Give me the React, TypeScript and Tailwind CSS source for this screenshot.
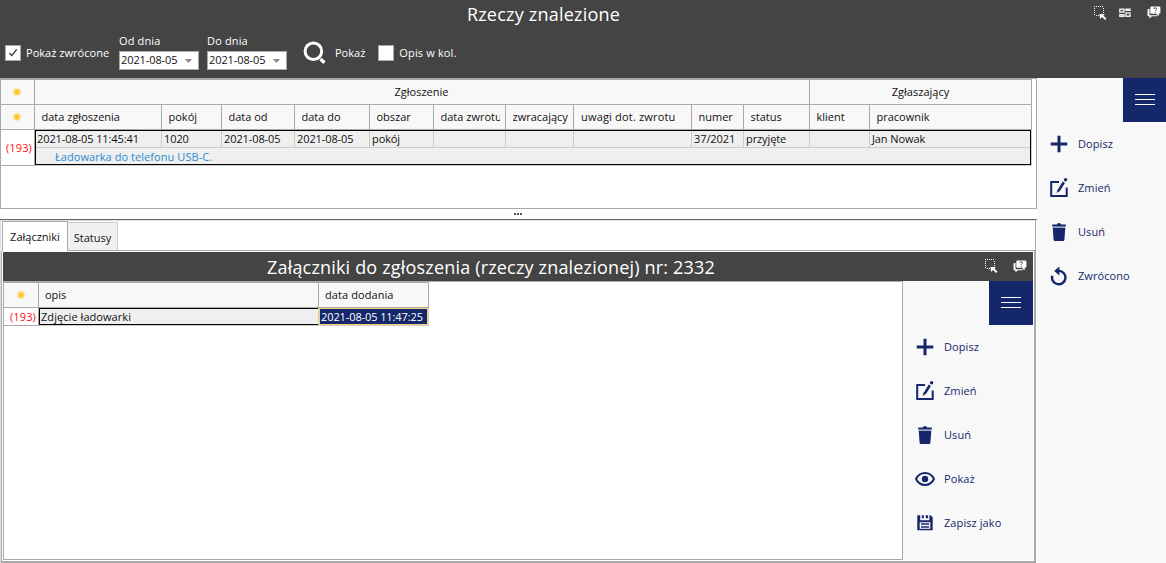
import type { ReactNode } from "react";

const columns = "grid-cols-[34px_127px_60px_73px_75px_64px_72px_68px_118px_52px_66px_60px_162px]";

const headers = [
  "data zgłoszenia",
  "pokój",
  "data od",
  "data do",
  "obszar",
  "data zwrotu",
  "zwracający",
  "uwagi dot. zwrotu",
  "numer",
  "status",
  "klient",
  "pracownik",
];

const record = [
  "2021-08-05 11:45:41",
  "1020",
  "2021-08-05",
  "2021-08-05",
  "pokój",
  "",
  "",
  "",
  "37/2021",
  "przyjęte",
  "",
  "Jan Nowak",
];

function Sun() {
  return (
    <svg width="10" height="10" viewBox="0 0 10 10" className="shrink-0">
      <path
        d="M5 .5v9M.5 5h9M1.8 1.8l6.4 6.4M8.2 1.8L1.8 8.2M3.2 .9l3.6 8.2M6.8 .9L3.2 9.1M.9 3.2l8.2 3.6M.9 6.8l8.2-3.6"
        stroke="#ffd45e"
        strokeWidth=".6"
      />
      <circle cx="5" cy="5" r="2.8" fill="#ffc72e" />
    </svg>
  );
}

function SelectIcon() {
  return (
    <svg width="14" height="16" viewBox="0 0 14 16" shapeRendering="crispEdges">
      <path
        d="M0 0h1v1H0zM2 0h1v1H2zM4 0h1v1H4zM6 0h1v1H6zM8 0h1v1H8zM0 2h1v1H0zM0 4h1v1H0zM0 6h1v1H0zM0 8h1v1H0zM9 2h1v1H9zM9 4h1v1H9zM9 6h1v1H9zM2 9h1v1H2zM4 9h1v1H4z"
        fill="#fff"
      />
      <path d="M5.500 8h5.500l-1.600 1.600L12.500 12.700 11.200 14 8 10.900 6 13z" fill="#fff" shapeRendering="auto" />
    </svg>
  );
}

function LayoutIcon() {
  return (
    <svg width="12" height="10" viewBox="0 0 12 10" fill="none" stroke="#eee" strokeWidth="1.400">
      <path d="M.8 1.200h4.200v2.800H.8zM7 1.200h4v1.200H7zM.8 6.600h4.200v1.600H.8zM7 4.900h4v3.300H7z" />
    </svg>
  );
}

function HelpIcon() {
  return (
    <svg width="14" height="13" viewBox="0 0 14 13">
      <path d="M2.500 3H1.600Q.5 3 .5 4v5.200q0 1 1 1h.9v2.300l2.600-2.300h4.600q.8 0 .8-1H3.300q-.8 0-.8-.8z" fill="#fff" />
      <path d="M4.500 .5H12q1.400 0 1.400 1.200v5q0 1.100-1.400 1.100h-.3v2.400L9.200 7.800H4.500q-1.200 0-1.200-1.100v-5Q3.300 .5 4.500 .5z" fill="#fff" />
      <path d="M6.800 2.800q.1-1 1.400-1 1.300.1 1.300 1.100 0 .6-.7 1-.5.3-.5.9M8.300 5.900v1" stroke="#444" strokeWidth="1" fill="none" />
    </svg>
  );
}

function SearchIcon() {
  return (
    <svg width="24" height="24" viewBox="0 0 24 24" fill="none" stroke="#fff">
      <circle cx="10.400" cy="10.200" r="8.300" strokeWidth="3" />
      <path d="M17.500 18l4 3.800" strokeWidth="3.400" />
    </svg>
  );
}

function PlusIcon() {
  return (
    <svg width="20" height="20" viewBox="0 0 20 20" className="text-[#14276a]">
      <path d="M10 1.700v16.600M1.700 10h16.600" stroke="currentColor" strokeWidth="3" />
    </svg>
  );
}

function EditIcon() {
  return (
    <svg width="20" height="20" viewBox="0 0 20 20" fill="none" stroke="#14276a">
      <path d="M10 4H2.200v14h15.500V9.500" strokeWidth="2" />
      <path d="M14.800 4.300L9.700 12.600" strokeWidth="2.600" />
      <path d="M8.500 11.600L7.700 15l3-2z" fill="#14276a" stroke="none" />
      <circle cx="16.600" cy="1.800" r="1.700" fill="#14276a" stroke="none" />
    </svg>
  );
}

function TrashIcon() {
  return (
    <svg width="20" height="20" viewBox="0 0 20 20" fill="#14276a">
      <path d="M3.200 2.400h4.600Q8 .9 10 .9t2.200 1.500h4.600v2H3.200z" />
      <path d="M3.600 4.400h12.800v1.300H3.600z" opacity=".25" />
      <path d="M3.700 5.700h12.600l-.9 12q-.1 1.400-1.400 1.400H6q-1.300 0-1.400-1.400z" />
    </svg>
  );
}

function UndoIcon() {
  return (
    <svg width="20" height="20" viewBox="0 0 20 20">
      <path d="M3.300 9.800A6.700 6.700 0 1 0 10 4.900H9" fill="none" stroke="#14276a" strokeWidth="2.400" />
      <path d="M10.400 .6v8.800L5.200 5z" fill="#14276a" />
    </svg>
  );
}

function EyeIcon() {
  return (
    <svg width="20" height="20" viewBox="0 0 20 20">
      <path d="M1 10Q4 4 10 4t9 6q-3 6-9 6T1 10z" fill="none" stroke="#14276a" strokeWidth="2" />
      <circle cx="10" cy="10" r="3.200" fill="#14276a" />
    </svg>
  );
}

function SaveIcon() {
  return (
    <svg width="20" height="20" viewBox="0 0 20 20">
      <path d="M2.300 2.300h2.900v5h9.200v-5h1.200l2.100 2v13H2.300z" fill="#14276a" />
      <path d="M6.800 2.300h2v3h-2zM10.800 2.300h2.300v3h-2.300z" fill="#14276a" />
      <path d="M4.700 9.200h10.600v6.600H4.700z" fill="#f8f8f8" />
      <path d="M6 11h8M6 14h8" stroke="#14276a" strokeWidth="1.300" />
    </svg>
  );
}

function MenuButton({ wide = false }: { wide?: boolean }) {
  return (
    <button
      className={
        wide
          ? "flex h-11 w-11 flex-col items-center justify-center gap-1 self-end bg-[#14276a] pb-px"
          : "flex h-11 w-[43px] flex-col items-center justify-center gap-1 self-end bg-[#14276a] pb-px"
      }
    >
      <span className="h-px w-5 bg-white" />
      <span className="h-px w-5 bg-white" />
      <span className="h-px w-5 bg-white" />
    </button>
  );
}

function Action({ icon, children }: { icon: ReactNode; children: ReactNode }) {
  return (
    <button className="flex h-11 items-center gap-[9px] pl-3 text-left tracking-[0.08px] text-[#14276a]">
      {icon}
      <span>{children}</span>
    </button>
  );
}

function DateField({ label }: { label: string }) {
  return (
    <div className="flex w-20 flex-col">
      <span className="h-[17px] leading-[13px] tracking-[0.15px] text-white">{label}</span>
      <div className="flex h-[19px] items-center justify-between border border-[#a9a9a9] bg-white pr-1.5 pl-px">
        <span className="pb-[2px] tracking-[-0.1px]">2021-08-05</span>
        <svg width="7" height="4" viewBox="0 0 7 4">
          <path d="M0 0h7L3.500 4z" fill="#888" />
        </svg>
      </div>
    </div>
  );
}

export default function App() {
  return (
    <div className="flex h-[563px] w-[1166px] flex-col overflow-hidden bg-white font-['Open_Sans','Noto_Sans',sans-serif] text-[11px] leading-4 whitespace-nowrap text-[#111]">
      <header className="flex h-[78px] shrink-0 flex-col bg-[#444]">
        <div className="grid h-[30px] grid-cols-[14px_1fr_93px]">
          <h1 className="col-start-2 text-center text-[18px] leading-[28px] tracking-[0.22px] text-white">Rzeczy znalezione</h1>
          <div className="flex items-start pt-[6px] pl-[21px]">
            <SelectIcon />
            <span className="pt-[2px] pl-[11px]"><LayoutIcon /></span>
            <span className="pl-4"><HelpIcon /></span>
          </div>
        </div>
        <div className="flex h-12 pl-[5px] text-white">
          <label className="flex w-[114px] items-start gap-[5px] pt-[15px]">
            <span className="flex size-4 items-center justify-center border border-[#a9a9a9] bg-white">
              <svg width="10" height="10" viewBox="0 0 10 10">
                <path d="M1.500 5l2.300 2.600L8.700 1.300" fill="none" stroke="#333" strokeWidth="1.300" />
              </svg>
            </span>
            <span className="tracking-[0.03px]">Pokaż zwrócone</span>
          </label>
          <div className="flex gap-2 pt-1 text-[#111]">
            <DateField label="Od dnia" />
            <DateField label="Do dnia" />
          </div>
          <button className="flex items-start pt-[11px] pl-4">
            <SearchIcon />
            <span className="pt-1 pl-2">Pokaż</span>
          </button>
          <label className="flex items-start gap-[5px] pt-[15px] pl-[13px]">
            <span className="size-4 border border-[#a9a9a9] bg-white" />
            <span className="tracking-[0.15px]">Opis w kol.</span>
          </label>
        </div>
      </header>

      <div className="flex h-[485px]">
        <main className="flex w-[1037px] flex-col">
          <section className="h-[131px] border border-[#a9a9a9]">
            <div className="w-[1031px] border-t border-[#a9a9a9]">
              <div className="-ml-px grid h-[25px] w-[1032px] grid-cols-[35px_775px_222px] bg-[#f8f8f8]">
                <div className="flex items-center justify-center border-x border-b border-[#a9a9a9] pr-px"><Sun /></div>
                <div className="flex items-center justify-center border-r border-b border-[#a9a9a9] pr-px">Zgłoszenie</div>
                <div className="flex items-center justify-center border-r border-b border-[#a9a9a9]">Zgłaszający</div>
              </div>
              <div className={`grid h-[25px] w-[1031px] bg-[#f8f8f8] ${columns}`}>
                <div className="flex items-center justify-center border-r border-b border-[#a9a9a9] pr-[2px]"><Sun /></div>
                {headers.map((h) => (
                  <div
                    key={h}
                    className={
                      h.startsWith("uwagi")
                        ? "flex items-center border-r border-b border-[#a9a9a9] pl-[7px] tracking-[0.18px]"
                        : "flex items-center overflow-hidden border-r border-b border-[#a9a9a9] pr-[5px] pl-[6.5px]"
                    }
                  >
                    <span className="w-full overflow-hidden">{h}</span>
                  </div>
                ))}
              </div>
              <div className="flex h-9">
                <div className="flex w-[34px] items-center justify-end border-r border-b border-[#a9a9a9] pr-[2px] tracking-[0.15px] text-[#ff1010]">(193)</div>
                <div className="flex w-[997px] flex-col border-r border-b border-[#ccc] bg-[#efefef]">
                  <div className="h-full w-[996px] border border-black">
                    <div className="grid h-[17px] grid-cols-[126px_60px_73px_75px_64px_72px_68px_118px_52px_66px_60px_160px] border-b border-[#ccc]">
                      {record.map((v, i) => (
                        <div key={i} className="border-r border-[#ccc] pl-[2px] leading-[15px] tracking-[-0.1px] last:border-r-0 first:pl-px">{v}</div>
                      ))}
                    </div>
                    <div className="pl-[19px] leading-[17px] tracking-[0.06px] text-[#2a8bd0]">Ładowarka do telefonu USB-C.</div>
                  </div>
                </div>
              </div>
            </div>
          </section>

          <div className="flex h-[11px] items-start justify-center gap-px border-b border-[#666] pt-1 pr-px">
            <span className="size-[2px] bg-[#555]" />
            <span className="size-[2px] bg-[#555]" />
            <span className="size-[2px] bg-[#555]" />
          </div>

          <section className="flex h-[343px] w-[1036px] flex-col border-t border-r border-l border-t-[#ddd] border-r-[#a9a9a9] border-l-[#ddd]">
            <div className="flex h-[30px] shrink-0 items-end pl-px">
              <div className="h-[30px] w-[66px] border border-b-0 border-[#a9a9a9] bg-white text-center leading-[30px]">Załączniki</div>
              <div className="h-[29px] w-[50px] border border-l-0 border-t-[#ccc] border-r-[#ccc] border-b-[#a9a9a9] bg-[#f0f0f0] text-center leading-[29px]">Statusy</div>
              <div className="h-px flex-1 bg-[#a9a9a9]" />
            </div>
            <div className="flex h-[312px] flex-col border-r border-b-2 border-l border-[#a9a9a9] pt-px pr-px pl-px">
              <div className="grid h-[29px] shrink-0 grid-cols-[21px_1fr_73px] bg-[#444]">
                <h2 className="col-start-2 pr-[2px] text-center text-[18px] leading-[31px] tracking-[0.18px] text-white">
                  Załączniki do zgłoszenia (rzeczy znalezionej) nr: 2332
                </h2>
                <div className="flex pt-[7px] pl-[25px]">
                  <SelectIcon />
                  <span className="pt-px pl-[14px]"><HelpIcon /></span>
                </div>
              </div>
              <div className="flex h-[279px]">
                <div className="h-full w-[900px] border border-[#a9a9a9]">
                  <div className="grid h-[26px] w-[425px] grid-cols-[35px_280px_110px] border-t border-[#a9a9a9] bg-[#f8f8f8]">
                    <div className="flex items-center justify-center border-r border-b border-[#a9a9a9]"><Sun /></div>
                    <div className="border-r border-b border-[#a9a9a9] pl-1.5 leading-6">opis</div>
                    <div className="border-r border-b border-[#a9a9a9] pl-1.5 leading-6 tracking-[0.08px]">data dodania</div>
                  </div>
                  <div className="grid h-[18px] w-[425px] grid-cols-[35px_280px_110px]">
                    <div className="border-r border-b border-[#a9a9a9] pr-[2px] text-right leading-[17px] tracking-[0.15px] text-[#ff1010]">(193)</div>
                    <div className="border-r border-b border-[#ccc] bg-[#efefef]">
                      <div className="h-full border border-r-0 border-black pl-px leading-[15px] tracking-[0.06px]">Zdjęcie ładowarki</div>
                    </div>
                    <div className="border-r border-b border-[#ccc] bg-[#efefef]">
                      <div className="h-full border border-[#f3d17a] bg-[#14276a] pl-px leading-[15px] tracking-[-0.1px] text-white">2021-08-05 11:47:25</div>
                    </div>
                  </div>
                </div>
                <aside className="flex w-[130px] flex-col bg-[#f8f8f8]">
                  <MenuButton wide />
                  <Action icon={<PlusIcon />}>Dopisz</Action>
                  <Action icon={<EditIcon />}>Zmień</Action>
                  <Action icon={<TrashIcon />}>Usuń</Action>
                  <Action icon={<EyeIcon />}>Pokaż</Action>
                  <Action icon={<SaveIcon />}>Zapisz jako</Action>
                </aside>
              </div>
            </div>
          </section>
        </main>

        <aside className="flex w-[129px] flex-col bg-[#f8f8f8]">
          <MenuButton />
          <Action icon={<PlusIcon />}>Dopisz</Action>
          <Action icon={<EditIcon />}>Zmień</Action>
          <Action icon={<TrashIcon />}>Usuń</Action>
          <Action icon={<UndoIcon />}>Zwrócono</Action>
        </aside>
      </div>
    </div>
  );
}
